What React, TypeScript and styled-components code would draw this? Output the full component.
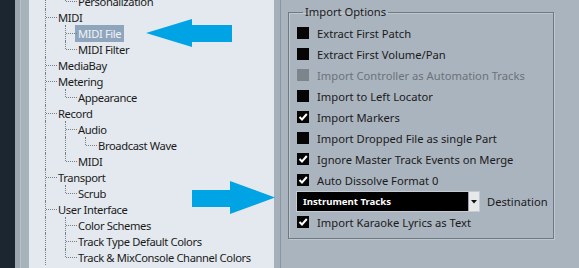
import React from "react";
import styled, { createGlobalStyle } from "styled-components";

const Global = createGlobalStyle`
  html, body { margin: 0; padding: 0; background: #aab4bf; overflow: hidden; }
  * { box-sizing: border-box; }
`;

const Page = styled.div`
  position: relative;
  display: flex;
  width: 579px;
  height: 268px;
  overflow: hidden;
  font-family: "Noto Sans", "Open Sans", sans-serif;
  font-size: 11.2px;
  color: #1a1a1a;
`;

const DarkStrip = styled.div`
  width: 15px;
  flex: none;
  background: #1c2631;
`;

const SideFrame = styled.div`
  width: 14px;
  flex: none;
  background: linear-gradient(to right, #9ca6af 0 5px, #b9c1c8 5px 6px, #a8b2bb 6px);
`;

const TreePanel = styled.div`
  width: 245px;
  flex: none;
  background: #e4e9ef;
  overflow: hidden;
`;

const TreeList = styled.div`
  margin-top: -7px;
  padding-left: 12px;
`;

const Row = styled.div`
  display: flex;
  align-items: stretch;
  height: 16px;
  white-space: nowrap;
`;

const Guide = styled.div<{ $on: boolean }>`
  width: 20px;
  flex: none;
  position: relative;
  &::before {
    content: "";
    display: ${(p) => (p.$on ? "block" : "none")};
    position: absolute;
    left: 4px;
    top: 0;
    bottom: 0;
    border-left: 1px dotted #767e86;
  }
`;

const Elbow = styled.div<{ $last: boolean }>`
  width: 17px;
  flex: none;
  position: relative;
  &::before {
    content: "";
    position: absolute;
    left: 4px;
    top: 0;
    height: ${(p) => (p.$last ? "8px" : "16px")};
    border-left: 1px dotted #767e86;
  }
  &::after {
    content: "";
    position: absolute;
    left: 5px;
    top: 8px;
    width: 11px;
    border-top: 1px dotted #767e86;
  }
`;

const Label = styled.span<{ $selected?: boolean }>`
  display: flex;
  align-items: center;
  height: 17px;
  margin-left: -3px;
  padding: 0 3px;
  line-height: 16px;
  letter-spacing: -0.38px;
  background: ${(p) => (p.$selected ? "#8ea5bc" : "transparent")};
  color: ${(p) => (p.$selected ? "#eef3f8" : "#1a1a1a")};
`;

const Gap = styled.div`
  width: 7px;
  flex: none;
  background: #a5afb9;
  border-right: 1px solid #8b959f;
`;

const RightPanel = styled.div`
  flex: 1;
  background: #aab4bf;
  padding: 4px 0 0 7px;
`;

const Group = styled.fieldset`
  margin: 0;
  width: 266px;
  height: 235px;
  padding: 3px 0 0 8px;
  border: 1px solid #6f7984;
  box-shadow: inset 1px 1px 0 #bfc7cf, 1px 1px 0 #bfc7cf;
`;

const Legend = styled.legend`
  margin-left: 6px;
  padding: 0 2px;
  line-height: 16px;
  font-size: 11.2px;
  color: #1a1a1a;
`;

const OptionRow = styled.div`
  display: flex;
  align-items: center;
  height: 21px;
  gap: 8px;
`;

const Box = styled.span<{ $disabled?: boolean }>`
  width: 12px;
  height: 12px;
  flex: none;
  display: flex;
  align-items: center;
  justify-content: center;
  margin-top: -1px;
  background: ${(p) => (p.$disabled ? "#7c848c" : "#050505")};
`;

const OptionText = styled.span<{ $disabled?: boolean }>`
  color: ${(p) => (p.$disabled ? "#6a727a" : "#1a1a1a")};
`;

const SelectRow = styled.div`
  display: flex;
  align-items: center;
  height: 21px;
  gap: 7px;
  margin-left: -1px;
`;

const Select = styled.div`
  display: flex;
  width: 184px;
  height: 21px;
  border: 1px solid #c5cbd1;
  background: #000;
`;

const SelectValue = styled.span`
  flex: 1;
  padding-left: 6px;
  color: #ffffff;
  font-weight: 700;
  font-size: 9.6px;
  line-height: 19px;
`;

const SelectButton = styled.span`
  width: 11px;
  display: flex;
  align-items: center;
  justify-content: center;
  background: #e6e8ea;
  border-left: 1px solid #9aa2aa;
`;

const Arrow = styled.svg`
  position: absolute;
  pointer-events: none;
`;

type TreeRow = { label: string; guides: boolean[]; last: boolean; selected?: boolean };

const tree: TreeRow[] = [
  { label: "Personalization", guides: [true], last: true },
  { label: "MIDI", guides: [], last: false },
  { label: "MIDI File", guides: [true], last: false, selected: true },
  { label: "MIDI Filter", guides: [true], last: true },
  { label: "MediaBay", guides: [], last: false },
  { label: "Metering", guides: [], last: false },
  { label: "Appearance", guides: [true], last: true },
  { label: "Record", guides: [], last: false },
  { label: "Audio", guides: [true], last: false },
  { label: "Broadcast Wave", guides: [true, true], last: true },
  { label: "MIDI", guides: [true], last: true },
  { label: "Transport", guides: [], last: false },
  { label: "Scrub", guides: [true], last: true },
  { label: "User Interface", guides: [], last: false },
  { label: "Color Schemes", guides: [true], last: false },
  { label: "Track Type Default Colors", guides: [true], last: false },
  { label: "Track & MixConsole Channel Colors", guides: [true], last: true },
];

type Opt = { label: string; checked?: boolean; disabled?: boolean };

const optionsTop: Opt[] = [
  { label: "Extract First Patch" },
  { label: "Extract First Volume/Pan" },
  { label: "Import Controller as Automation Tracks", disabled: true },
  { label: "Import to Left Locator" },
  { label: "Import Markers", checked: true },
  { label: "Import Dropped File as single Part" },
  { label: "Ignore Master Track Events on Merge", checked: true },
  { label: "Auto Dissolve Format 0", checked: true },
];

const Check = () => (
  <svg width="10" height="10" viewBox="0 0 10 10">
    <polyline points="1.5,5 4,7.5 8.8,2" fill="none" stroke="#ffffff" strokeWidth="2" />
  </svg>
);

const Option = ({ o }: { o: Opt }) => (
  <OptionRow>
    <Box $disabled={o.disabled}>{o.checked && <Check />}</Box>
    <OptionText $disabled={o.disabled}>{o.label}</OptionText>
  </OptionRow>
);

export default function App() {
  return (
    <>
      <Global />
      <Page>
        <DarkStrip />
        <SideFrame />
        <TreePanel>
          <TreeList>
            {tree.map((r, i) => (
              <Row key={i}>
                {r.guides.map((g, j) => (
                  <Guide key={j} $on={g} />
                ))}
                <Elbow $last={r.last} />
                <Label $selected={r.selected}>{r.label}</Label>
              </Row>
            ))}
          </TreeList>
        </TreePanel>
        <Gap />
        <RightPanel>
          <Group>
            <Legend>Import Options</Legend>
            {optionsTop.map((o, i) => (
              <Option key={i} o={o} />
            ))}
            <SelectRow>
              <Select>
                <SelectValue>Instrument Tracks</SelectValue>
                <SelectButton>
                  <svg width="6" height="4" viewBox="0 0 6 4">
                    <polygon points="0,0 6,0 3,3.5" fill="#111" />
                  </svg>
                </SelectButton>
              </Select>
              <span>Destination</span>
            </SelectRow>
            <Option o={{ label: "Import Karaoke Lyrics as Text", checked: true }} />
          </Group>
        </RightPanel>
        <Arrow style={{ left: 0, top: 0 }} width="579" height="268" viewBox="0 0 579 268">
          <polygon
            points="146,33 192,19 192,25 232,25 232,42 192,42 192,47"
            fill="#00a3e4"
          />
          <polygon
            points="192,190 230,190 230,181 275,197.5 230,214 230,207 192,207"
            fill="#00a3e4"
          />
        </Arrow>
      </Page>
    </>
  );
}
